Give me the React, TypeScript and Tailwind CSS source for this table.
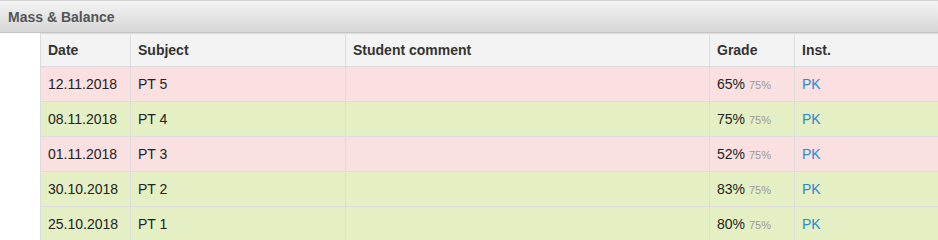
import React from 'react';

type Row = { date: string; subject: string; grade: number; passed: boolean };

const rows: Row[] = [
  { date: '12.11.2018', subject: 'PT 5', grade: 65, passed: false },
  { date: '08.11.2018', subject: 'PT 4', grade: 75, passed: true },
  { date: '01.11.2018', subject: 'PT 3', grade: 52, passed: false },
  { date: '30.10.2018', subject: 'PT 2', grade: 83, passed: true },
  { date: '25.10.2018', subject: 'PT 1', grade: 80, passed: true },
];

export default function App() {
  return (
    <div className="h-[240px] w-[938px] overflow-hidden bg-white font-['Liberation_Sans',Arial,sans-serif] text-[14px] text-[#222]">
      <div className="flex h-[33px] items-center border-t border-b border-t-[#d0d0d0] border-b-[#c4c4c4] bg-gradient-to-b from-[#f4f4f4] to-[#d6d6d6] px-2 pt-px">
        <h2 className="text-[14px] font-bold text-[#555]">Mass &amp; Balance</h2>
      </div>
      <div className="pl-10">
        <table className="w-[1000px] table-fixed border-collapse">
          <colgroup>
            <col className="w-[90px]" />
            <col className="w-[215px]" />
            <col className="w-[364px]" />
            <col className="w-[85px]" />
            <col />
          </colgroup>
          <thead>
            <tr className="h-[33px] bg-[#f3f3f3] text-left">
              <Th>Date</Th>
              <Th>Subject</Th>
              <Th>Student comment</Th>
              <Th>Grade</Th>
              <Th>Inst.</Th>
            </tr>
          </thead>
          <tbody>
            {rows.map((row) => (
              <tr key={row.date} className={row.passed ? 'h-[35px] bg-[#e4efc3]' : 'h-[35px] bg-[#fae0e0]'}>
                <Td>{row.date}</Td>
                <Td>{row.subject}</Td>
                <Td />
                <Td>
                  {row.grade}% <span className="text-[11px] text-[#999]">75%</span>
                </Td>
                <Td>
                  <a className="text-[#2a89d1]">PK</a>
                </Td>
              </tr>
            ))}
          </tbody>
        </table>
      </div>
    </div>
  );
}

function Th({ children }: { children: React.ReactNode }) {
  return <th className="border border-[#dcdcdc] px-[7px] text-left font-bold text-[#333]">{children}</th>;
}

function Td({ children }: { children?: React.ReactNode }) {
  return <td className="border border-[#dcdcdc] px-[7px]">{children}</td>;
}
